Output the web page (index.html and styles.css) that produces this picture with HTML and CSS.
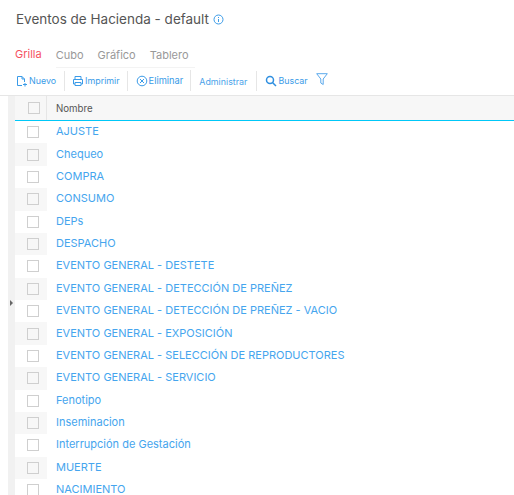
FILE: index.html
```html
<!DOCTYPE html>
<html lang="es">
  <head>
    <meta charset="UTF-8" />
    <title>Eventos de Hacienda - default</title>
    <link rel="stylesheet" href="styles.css">
  </head>
  <body>
    <header class="title-bar">
      <h1>Eventos de Hacienda - default</h1>
      <svg class="info-icon" width="11" height="11" viewBox="0 0 11 11" fill="none" stroke="#3a9be8">
        <circle cx="5.5" cy="5.5" r="4.5" />
        <path d="M5.5 5v3M5.5 3v1" />
      </svg>
    </header>
    <nav class="tabs">
      <span class="tab active">Grilla</span>
      <div class="tab-group">
        <span class="tab">Cubo</span>
        <span class="tab">Gráfico</span>
        <span class="tab">Tablero</span>
      </div>
    </nav>
    <div class="toolbar">
      <a class="tool tool-first">
        <svg width="12" height="12" viewBox="0 0 12 12" fill="none" stroke="#3a9be8">
          <path d="M6 10.5H1.500v-9h4.500l2.500 2.500v3M6 1.500V4h2.500M9 8v3.500M7 9.500h4" />
        </svg>
        Nuevo
      </a>
      <a class="tool">
        <svg width="12" height="12" viewBox="0 0 12 12" fill="none" stroke="#3a9be8">
          <path d="M3 4V1.500h6V4M1.500 9V4.500h9V9H9M3 9H1.500M3 7.500h6v3H3z" />
        </svg>
        Imprimir
      </a>
      <a class="tool tool-delete">
        <svg width="12" height="12" viewBox="0 0 12 12" fill="none" stroke="#3a9be8">
          <circle cx="6" cy="6" r="4.800" />
          <path d="M4 4l4 4M8 4l-4 4" />
        </svg>
        Eliminar
      </a>
      <a class="tool tool-admin">Administrar</a>
      <a class="tool tool-search">
        <svg width="12" height="12" viewBox="0 0 12 12" fill="none" stroke="#2f8fe0" stroke-width="1.500">
          <circle cx="5" cy="5" r="3.500" />
          <path d="M7.500 7.500l3.500 3.500" />
        </svg>
        Buscar
      </a>
      <svg class="filter-icon" width="12" height="13" viewBox="0 0 12 13" fill="none" stroke="#5aa9ec">
        <path d="M0.700 0.700h10.600L7.200 6v5.500l-2.400-1.500V6z" />
      </svg>
    </div>
    <div class="grid-wrap">
      <div class="gutter"><span class="gutter-arrow"></span></div>
      <div class="grid">
        <div class="grid-head">
          <div class="check-cell"><span class="check"></span></div>
          <div class="name-cell">Nombre</div>
        </div>
        <div class="row"><div class="check-cell"><span class="check"></span></div><a class="name-cell">AJUSTE</a></div>
        <div class="row"><div class="check-cell"><span class="check"></span></div><a class="name-cell">Chequeo</a></div>
        <div class="row"><div class="check-cell"><span class="check"></span></div><a class="name-cell">COMPRA</a></div>
        <div class="row"><div class="check-cell"><span class="check"></span></div><a class="name-cell">CONSUMO</a></div>
        <div class="row"><div class="check-cell"><span class="check"></span></div><a class="name-cell">DEPs</a></div>
        <div class="row"><div class="check-cell"><span class="check"></span></div><a class="name-cell">DESPACHO</a></div>
        <div class="row"><div class="check-cell"><span class="check"></span></div><a class="name-cell">EVENTO GENERAL - DESTETE</a></div>
        <div class="row"><div class="check-cell"><span class="check"></span></div><a class="name-cell">EVENTO GENERAL - DETECCIÓN DE PREÑEZ</a></div>
        <div class="row"><div class="check-cell"><span class="check"></span></div><a class="name-cell">EVENTO GENERAL - DETECCIÓN DE PREÑEZ - VACIO</a></div>
        <div class="row"><div class="check-cell"><span class="check"></span></div><a class="name-cell">EVENTO GENERAL - EXPOSICIÓN</a></div>
        <div class="row"><div class="check-cell"><span class="check"></span></div><a class="name-cell">EVENTO GENERAL - SELECCIÓN DE REPRODUCTORES</a></div>
        <div class="row"><div class="check-cell"><span class="check"></span></div><a class="name-cell">EVENTO GENERAL - SERVICIO</a></div>
        <div class="row"><div class="check-cell"><span class="check"></span></div><a class="name-cell">Fenotipo</a></div>
        <div class="row"><div class="check-cell"><span class="check"></span></div><a class="name-cell">Inseminacion</a></div>
        <div class="row"><div class="check-cell"><span class="check"></span></div><a class="name-cell">Interrupción de Gestación</a></div>
        <div class="row"><div class="check-cell"><span class="check"></span></div><a class="name-cell">MUERTE</a></div>
        <div class="row"><div class="check-cell"><span class="check"></span></div><a class="name-cell">NACIMIENTO</a></div>
      </div>
    </div>
  </body>
</html>
```

FILE: styles.css
```css
html,
body {
  height: 100%;
}
body {
  margin: 0;
  overflow: hidden;
  background-color: white;
  color: #555;
  font-family: "Inter", "Open Sans", sans-serif;
  font-size: 11px;
}
.title-bar {
  display: flex;
  align-items: center;
  gap: 4px;
  height: 38px;
  padding-left: 16px;
}
h1 {
  margin: 0;
  font-size: 13.500px;
  font-weight: 400;
  color: #555;
}
.tabs {
  display: flex;
  align-items: center;
  height: 32px;
  padding-left: 15px;
  font-size: 11px;
}
.tab {
  color: #999;
}
.tab.active {
  color: #f5515f;
  margin-right: 14px;
}
.tab-group {
  display: flex;
  gap: 14px;
  padding-right: 6px;
  height: 24px;
  align-items: center;
  border-bottom: 1px solid #f3f3f3;
  margin-top: 2px;
}
.toolbar {
  display: flex;
  align-items: center;
  height: 21px;
  padding-left: 16px;
  padding-bottom: 4px;
  border-bottom: 1px solid #e6e6e6;
}
.tool {
  display: flex;
  align-items: center;
  gap: 1px;
  height: 20px;
  padding: 0 7px;
  border-left: 1px solid #e6e6e6;
  color: #3a9be8;
  font-size: 8.900px;
}
.tool-first {
  padding-left: 0;
  padding-right: 8px;
  border-left: none;
}
.tool-delete {
  padding-left: 8px;
  font-size: 9.300px;
}
.tool-admin {
  color: #4ba3ea;
  padding: 1px 9px 0 8px;
}
.tool-search {
  padding-left: 8px;
}
.filter-icon {
  margin-left: 1px;
  margin-top: -2px;
}
.grid-wrap {
  display: flex;
  margin-left: 8px;
}
.gutter {
  position: relative;
  width: 7px;
  flex: none;
  background-color: #f1f1f1;
}
.gutter-arrow {
  position: absolute;
  left: 2px;
  top: 204px;
  border-left: 3px solid #666;
  border-top: 3px solid transparent;
  border-bottom: 3px solid transparent;
}
.grid {
  flex: 1;
}
.grid-head {
  display: flex;
  height: 24px;
  background-color: #f7f7f7;
  border-bottom: 1px solid #00c8f8;
  font-size: 9.700px;
  color: #555;
}
.row {
  display: flex;
  height: 22.375px;
}
.check-cell {
  display: flex;
  align-items: center;
  width: 32px;
  padding-left: 12px;
  box-sizing: border-box;
  flex: none;
}
.grid-head .check-cell {
  padding-left: 13px;
  border-right: 1px solid #e6e6e6;
}
.row:nth-child(odd) .check-cell {
  background-color: #f7f7f7;
}
.check {
  display: block;
  width: 10px;
  height: 10px;
  border: 1px solid #cfcfcf;
  background-color: white;
}
.row:nth-child(odd) .check,
.grid-head .check {
  background-color: #f7f7f7;
}
.name-cell {
  display: flex;
  align-items: center;
  padding-left: 9px;
  white-space: nowrap;
}
a.name-cell {
  padding-bottom: 2px;
  color: #45a5ee;
}
```
